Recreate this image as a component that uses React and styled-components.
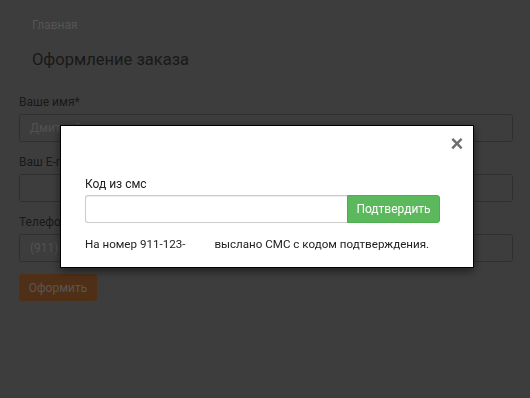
import React from "react";
import styled, { createGlobalStyle } from "styled-components";

const GlobalStyle = createGlobalStyle`
  html, body {
    margin: 0;
    padding: 0;
    background: #7b7b7b;
  }
  * {
    box-sizing: border-box;
  }
`;

const Page = styled.div`
  width: 530px;
  height: 398px;
  background: #7b7b7b;
  font-family: Roboto, "Liberation Sans", sans-serif;
  color: #333;
  overflow: hidden;
`;

const Breadcrumbs = styled.div`
  height: 38px;
  padding: 18px 32px 0;
  font-size: 12px;
  color: #a8a8a8;
`;

const Title = styled.h1`
  margin: 0;
  padding: 11px 32px 0;
  font-size: 16.5px;
  font-weight: 400;
  line-height: 22px;
  color: #333;
`;

const Form = styled.form`
  padding: 23px 17px 0 19px;
  display: flex;
  flex-direction: column;
`;

const Group = styled.div`
  display: flex;
  flex-direction: column;
  margin-bottom: 12px;
`;

const Label = styled.label`
  font-size: 12px;
  line-height: 17px;
  margin-bottom: 3px;
  color: #333;
`;

const Field = styled.div`
  height: 28px;
  border: 1px solid #5e5e5e;
  border-radius: 3px;
  padding: 0 10px;
  font-size: 12px;
  line-height: 26px;
  color: #a2a2a2;
`;

const SubmitButton = styled.button`
  align-self: flex-start;
  width: 78px;
  height: 27px;
  border: none;
  border-radius: 3px;
  background: #a05e2e;
  color: #b0aaa4;
  font-family: inherit;
  font-size: 12px;
`;

const Backdrop = styled.div`
  position: fixed;
  inset: 0;
  background: rgba(0, 0, 0, 0.5);
`;

const Modal = styled.div`
  position: fixed;
  left: 60px;
  top: 125px;
  width: 414px;
  height: 143px;
  background: #fff;
  border: 1px solid #000;
  box-shadow: 0 3px 9px rgba(0, 0, 0, 0.5);
  font-family: Roboto, "Liberation Sans", sans-serif;
  color: #222;
  padding: 0 33px 0 24px;
  display: flex;
  flex-direction: column;
`;

const ModalHeader = styled.div`
  display: flex;
  justify-content: flex-end;
  height: 50px;
  padding-top: 6px;
  margin-right: -27px;
`;

const Close = styled.button`
  border: none;
  background: none;
  padding: 0;
  width: 20px;
  height: 24px;
  font-family: "Liberation Sans", Arial, sans-serif;
  font-size: 22px;
  font-weight: 700;
  line-height: 24px;
  color: #6f6f6f;
`;

const SmsLabel = styled.label`
  font-size: 12px;
  line-height: 16px;
  margin-bottom: 3px;
`;

const InputGroup = styled.div`
  display: flex;
  height: 28px;
`;

const SmsInput = styled.input`
  flex: 1;
  height: 28px;
  border: 1px solid #ccc;
  border-right: none;
  border-radius: 3px 0 0 3px;
  box-shadow: inset 0 1px 1px rgba(0, 0, 0, 0.075);
  outline: none;
`;

const ConfirmButton = styled.button`
  width: 93px;
  height: 28px;
  border: 1px solid #4cae4c;
  border-radius: 0 3px 3px 0;
  background: #5cb85c;
  color: #fff;
  font-family: Roboto, "Liberation Sans", sans-serif;
  font-size: 12px;
  padding: 0;
`;

const Note = styled.p`
  margin: 13px 0 0;
  font-size: 11.6px;
  line-height: 16px;
  white-space: nowrap;
`;

const Hidden = styled.span`
  display: inline-block;
  width: 29px;
`;

export default function App() {
  return (
    <>
      <GlobalStyle />
      <Page>
        <Breadcrumbs>Главная</Breadcrumbs>
        <Title>Оформление заказа</Title>
        <Form>
          <Group>
            <Label>Ваше имя*</Label>
            <Field>Дмитрий</Field>
          </Group>
          <Group>
            <Label>Ваш E-mail</Label>
            <Field />
          </Group>
          <Group>
            <Label>Телефон*</Label>
            <Field>(911) 123-45-67</Field>
          </Group>
          <SubmitButton type="button">Оформить</SubmitButton>
        </Form>
      </Page>
      <Backdrop />
      <Modal>
        <ModalHeader>
          <Close type="button">×</Close>
        </ModalHeader>
        <SmsLabel>Код из смс</SmsLabel>
        <InputGroup>
          <SmsInput type="text" />
          <ConfirmButton type="button">Подтвердить</ConfirmButton>
        </InputGroup>
        <Note>
          На номер 911-123-<Hidden />выслано СМС с кодом подтверждения.
        </Note>
      </Modal>
    </>
  );
}
